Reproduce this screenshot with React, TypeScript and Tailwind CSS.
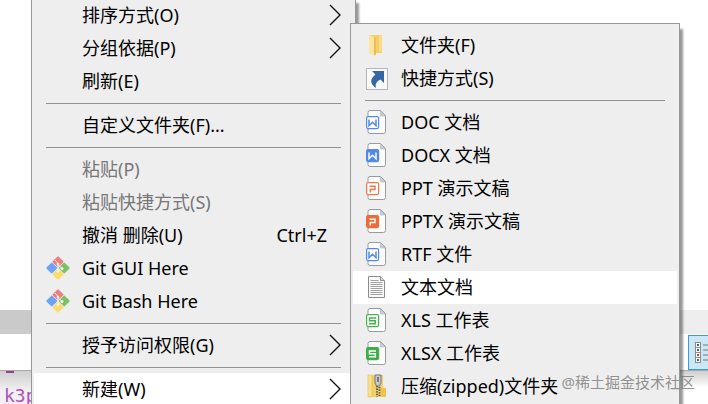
import type { ReactNode } from "react";

const textFont =
  "font-['Noto_Sans','Noto_Sans_CJK_SC',sans-serif]";

function Chevron() {
  return (
    <svg className="h-[22px] w-3 shrink-0" viewBox="0 0 12 22" fill="none" stroke="#111" strokeWidth="1.4" aria-hidden="true">
      <path d="M1 1 11 11 1 21" />
    </svg>
  );
}

function GitIcon() {
  return (
    <svg className="h-6 w-6" viewBox="0 0 24 24" aria-hidden="true">
      <g transform="rotate(45 12 12)">
        <rect x="3.500" y="3.500" width="8.200" height="8.200" rx="1" fill="#ee7d80" />
        <rect x="12.300" y="3.500" width="8.200" height="8.200" rx="1" fill="#7cc163" />
        <rect x="3.500" y="12.300" width="8.200" height="8.200" rx="1" fill="#6fa2f4" />
        <rect x="12.300" y="12.300" width="8.200" height="8.200" rx="1" fill="#fbdc6c" />
      </g>
      <path d="M9 4 12 7.500V16M12 8.500l3.500 3.500" fill="none" stroke="#f6f6f0" strokeWidth="1" />
      <circle cx="12" cy="8" r="1.300" fill="#f6f6f0" />
      <circle cx="12" cy="15.500" r="1.300" fill="#f6f6f0" />
      <circle cx="16" cy="12.500" r="1.500" fill="#f6f6f0" />
    </svg>
  );
}

function FolderIcon() {
  return (
    <svg className="h-6 w-6" viewBox="0 0 24 24" aria-hidden="true">
      <path d="M4 2h13v18H4z" fill="#f3cf68" />
      <path d="M14 2h3v15l-2 2h-1z" fill="#f9dc83" />
      <path d="M4 2l5 2.500V22.500l-5-2.500z" fill="#fbe3a0" />
      <path d="M9 4.500V22.500l2-1V5z" fill="#e8bd52" />
    </svg>
  );
}

function ShortcutIcon() {
  return (
    <svg className="h-6 w-6" viewBox="0 0 24 24" aria-hidden="true">
      <rect x="1.500" y="2.500" width="21" height="21" fill="#f8f9fb" stroke="#b5b5b5" />
      <path d="M7 5h12v12l-3.500-3.500c-4 2-5.500 4.500-4.500 8.500-6-4-6.500-9-.5-13.500z" fill="#3465a4" />
    </svg>
  );
}

function Sheet() {
  return (
    <>
      <path d="M6 .5h10.500l5 5V21.500a2 2 0 0 1-2 2H6a2 2 0 0 1-2-2V2.500a2 2 0 0 1 2-2z" fill="#fdfdfd" stroke="#959ba3" />
      <path d="M16.500 1v5H21z" fill="#c9d0da" stroke="#a9b0ba" strokeWidth=".6" />
    </>
  );
}

const marks = {
  W: "M5 9.500v6.200l3.500-3.400 3.500 3.400V9.500",
  P: "M5.500 10.200H11v3.300H6.300v3",
  S: "M12 10H5.500v2.800h5.800v3H5",
};

function OfficeIcon({ mark, color, solid = false }: { mark: keyof typeof marks; color: string; solid?: boolean }) {
  return (
    <svg className="h-6 w-6" viewBox="1 0 24 24" aria-hidden="true">
      <Sheet />
      <rect x="2.600" y="6.600" width="12" height="12" rx="1.500" fill={solid ? color : "#fff"} stroke={color} strokeWidth="1.200" />
      <path d={marks[mark]} fill="none" stroke={solid ? "#fff" : color} strokeWidth="1.500" />
    </svg>
  );
}

function TextIcon() {
  return (
    <svg className="h-6 w-6" viewBox="1 0 24 24" aria-hidden="true">
      <path d="M4.500 1.500h12l4 4v17h-16z" fill="#fafafa" stroke="#8c8c8c" />
      <path d="M16.500 1.500v4h4" fill="#ddd" stroke="#8c8c8c" />
      <path d="M6.500 5.500h8M6.500 7.500h12M6.500 9.500h12M6.500 11.500h12M6.500 13.500h12M6.500 15.500h12M6.500 17.500h12M6.500 19.500h12" stroke="#a2a2a2" />
    </svg>
  );
}

function ZipIcon() {
  return (
    <svg className="h-6 w-6" viewBox="1 0 24 24" aria-hidden="true">
      <path d="M4 1h15v13l3 1v8H4z" fill="#f4cf64" />
      <path d="M4 1h3l1 1v21H4z" fill="#fae08e" stroke="#e3b94c" strokeWidth=".6" />
      <path d="M17 14h5v9h-5z" fill="#f0c34f" />
      <path d="M11 1h6v8l-1.500 3h-3L11 9z" fill="#c7c9cb" stroke="#74777b" />
      <path d="M14 3v5" stroke="#5a5d61" strokeWidth="1.500" />
      <path d="M13 12v11M15.500 13v10" stroke="#55585c" strokeWidth="2" strokeDasharray="1.300 1.300" />
    </svg>
  );
}

type ItemProps = {
  label: string;
  icon?: ReactNode;
  hint?: string;
  submenu?: boolean;
  disabled?: boolean;
  active?: boolean;
};

function Item({ label, icon, hint, submenu, disabled, active }: ItemProps) {
  return (
    <button
      type="button"
      role="menuitem"
      disabled={disabled}
      aria-haspopup={submenu ? "menu" : undefined}
      className={`flex h-[33px] w-full items-center whitespace-nowrap px-3 pb-0.5 text-left text-lg ${
        disabled ? "text-[#777]" : "text-black"
      } ${active ? "bg-white" : ""}`}
    >
      <span className="flex w-9 shrink-0">{icon}</span>
      <span className="grow">{label}</span>
      {hint && <span className="pr-3.5">{hint}</span>}
      {submenu && <Chevron />}
    </button>
  );
}

function Divider() {
  return <hr className="mx-3 mt-[5px] mb-[5px] border-t border-[#929292]" />;
}

export default function App() {
  return (
    <div className={`relative h-screen overflow-hidden bg-white ${textFont}`}>
      <div className="flex h-full flex-col">
        <div className="h-[310px] shrink-0" />
        <div className="flex h-6 shrink-0">
          <div className="w-1/2 bg-[#cacaca]" />
          <div className="w-1/2 bg-[#eee]" />
        </div>
        <div className="flex h-[37px] shrink-0 items-center justify-end border-b border-[#aaa] bg-white">
          <button type="button" aria-label="详细信息" className="flex h-[35px] w-5 items-center border border-r-0 border-[#3c9bd6] bg-[#cbe8f6]">
            <svg className="h-6 w-5 shrink-0" viewBox="0 0 20 24" aria-hidden="true">
              <rect x="6.500" y="2.500" width="5" height="20" fill="#fff" stroke="#8a8a8a" />
              <path d="M6 7.500h6M6 12.500h6M6 17.500h6" stroke="#8a8a8a" />
              <path d="M8 5h2M8 10h2M8 20h2" stroke="#3d6b50" strokeWidth="2" />
              <path d="M8 15h2" stroke="#c23b2e" strokeWidth="2" />
              <path d="M14 5h6M14 10h6M14 15h6M14 20h6" stroke="#777" />
            </svg>
          </button>
        </div>
        <div className="flex h-[33px] shrink-0">
          <div className="flex w-1/2 flex-col justify-between bg-linear-to-b from-[#cfcfcf] to-[#f1f0f2] to-60% pl-1">
            <div className="ml-0.5 h-0.5 w-2 bg-[#93418f]" />
            <div className="font-['DejaVu_Sans_Mono',monospace] text-lg/4 text-[#b04fc0]">k3p</div>
          </div>
          <div className="w-1/2 bg-linear-to-b from-[#cfcfcf] to-white to-50%" />
        </div>
      </div>

      <div role="menu" aria-label="文件夹" className="absolute -top-[1px] left-[31px] w-[325px] border-x border-[#979797] bg-[#eee] px-0.5 shadow-[3px_4px_2px_#0006]">
        <Item label="排序方式(O)" submenu />
        <Item label="分组依据(P)" submenu />
        <Item label="刷新(E)" />
        <Divider />
        <Item label="自定义文件夹(F)..." />
        <Divider />
        <Item label="粘贴(P)" disabled />
        <Item label="粘贴快捷方式(S)" disabled />
        <Item label="撤消 删除(U)" hint="Ctrl+Z" />
        <Item label="Git GUI Here" icon={<GitIcon />} />
        <Item label="Git Bash Here" icon={<GitIcon />} />
        <Divider />
        <Item label="授予访问权限(G)" submenu />
        <Divider />
        <Item label="新建(W)" submenu active />
      </div>

      <div role="menu" aria-label="新建" className="absolute top-[23px] left-[350px] w-[330px] border border-[#979797] bg-[#eee] px-0.5 pt-[5px] pb-1 shadow-[3px_6px_2px_#0006]">
        <Item label="文件夹(F)" icon={<FolderIcon />} />
        <Item label="快捷方式(S)" icon={<ShortcutIcon />} />
        <Divider />
        <Item label="DOC 文档" icon={<OfficeIcon mark="W" color="#5288ee" />} />
        <Item label="DOCX 文档" icon={<OfficeIcon mark="W" color="#5288ee" solid />} />
        <Item label="PPT 演示文稿" icon={<OfficeIcon mark="P" color="#f2794a" />} />
        <Item label="PPTX 演示文稿" icon={<OfficeIcon mark="P" color="#ee6c38" solid />} />
        <Item label="RTF 文件" icon={<OfficeIcon mark="W" color="#5288ee" />} />
        <Item label="文本文档" icon={<TextIcon />} active />
        <Item label="XLS 工作表" icon={<OfficeIcon mark="S" color="#45b34c" />} />
        <Item label="XLSX 工作表" icon={<OfficeIcon mark="S" color="#3fae49" solid />} />
        <Item label="压缩(zipped)文件夹" icon={<ZipIcon />} />
      </div>

      <p className="absolute right-[13px] bottom-3 text-[15px]/5 text-[#777]/80">@稀土掘金技术社区</p>
    </div>
  );
}
